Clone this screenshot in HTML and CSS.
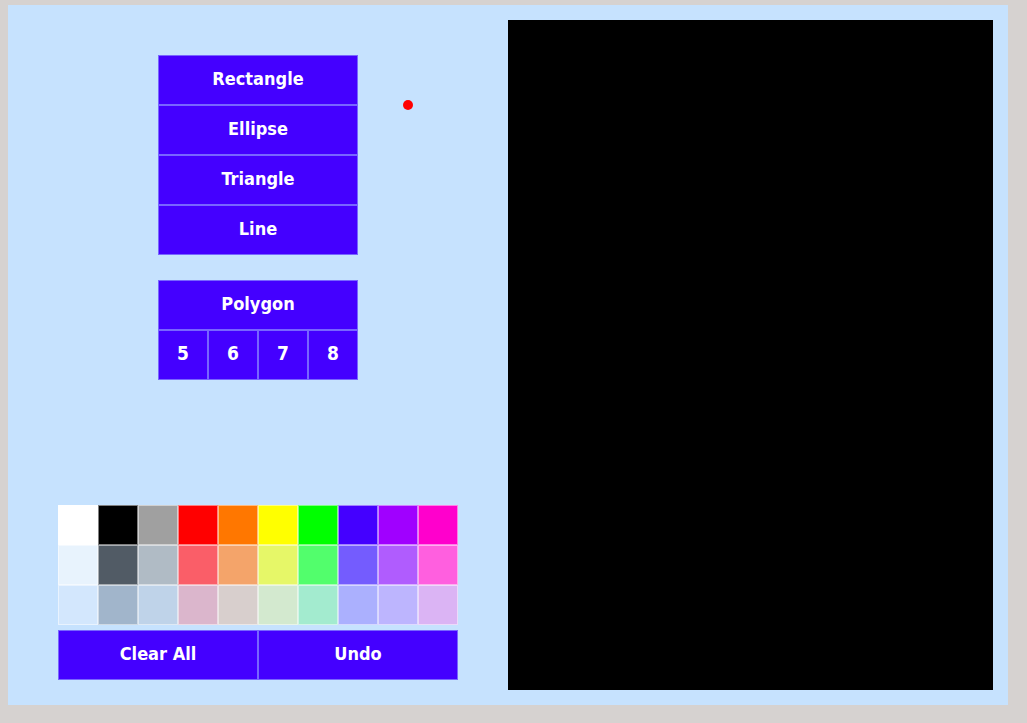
FILE: index.html
```html
<!DOCTYPE html>
<html>
<head>
<meta charset="utf-8">
<link rel="stylesheet" href="styles.css">
</head>
<body>
<div class="app">
  <div class="tools">
    <div class="group">
      <div class="btn">Rectangle</div>
      <div class="btn">Ellipse</div>
      <div class="btn">Triangle</div>
      <div class="btn">Line</div>
    </div>
    <div class="group poly">
      <div class="btn">Polygon</div>
      <div class="sides">
        <div class="btn">5</div>
        <div class="btn">6</div>
        <div class="btn">7</div>
        <div class="btn">8</div>
      </div>
    </div>
    <div class="spacer"></div>
    <div class="palette">
      <div class="sw" style="background:#ffffff"></div>
      <div class="sw" style="background:#000000"></div>
      <div class="sw" style="background:#a0a0a0"></div>
      <div class="sw" style="background:#ff0000"></div>
      <div class="sw" style="background:#ff7700"></div>
      <div class="sw" style="background:#ffff00"></div>
      <div class="sw" style="background:#00ff00"></div>
      <div class="sw" style="background:#4400ff"></div>
      <div class="sw" style="background:#a000ff"></div>
      <div class="sw" style="background:#ff00cc"></div>
      <div class="sw" style="background:#e8f3fd"></div>
      <div class="sw" style="background:#515b65"></div>
      <div class="sw" style="background:#b0bbc5"></div>
      <div class="sw" style="background:#fa5e68"></div>
      <div class="sw" style="background:#f4a46a"></div>
      <div class="sw" style="background:#e6f768"></div>
      <div class="sw" style="background:#52fe6c"></div>
      <div class="sw" style="background:#745cfe"></div>
      <div class="sw" style="background:#b05cfe"></div>
      <div class="sw" style="background:#ff5fdf"></div>
      <div class="sw" style="background:#d3e7fd"></div>
      <div class="sw" style="background:#a1b5cb"></div>
      <div class="sw" style="background:#bfd3e9"></div>
      <div class="sw" style="background:#dbb6cc"></div>
      <div class="sw" style="background:#d8cfcd"></div>
      <div class="sw" style="background:#d3e9cf"></div>
      <div class="sw" style="background:#a3ebcf"></div>
      <div class="sw" style="background:#abb0fe"></div>
      <div class="sw" style="background:#bdb5fe"></div>
      <div class="sw" style="background:#dbb4f4"></div>
    </div>
    <div class="actions">
      <div class="btn">Clear All</div>
      <div class="btn">Undo</div>
    </div>
  </div>
  <div class="canvas"></div>
  <div class="dot"></div>
</div>
</body>
</html>
```
FILE: styles.css
```css
html, body {
  margin: 0;
  padding: 0;
  background: #d6d2d0;
}
body {
  padding: 5px 0 0 8px;
  font-family: "DejaVu Sans Condensed", "DejaVu Sans", sans-serif;
}
.app {
  position: relative;
  width: 1000px;
  height: 700px;
  background: #c6e2fe;
  display: flex;
}
.tools {
  width: 500px;
  display: flex;
  flex-direction: column;
  align-items: center;
  padding: 50px 0 25px;
  box-sizing: border-box;
}
.group {
  width: 200px;
  display: flex;
  flex-direction: column;
}
.poly {
  margin-top: 25px;
}
.btn {
  height: 50px;
  box-sizing: border-box;
  background: #4400ff;
  border: 1px solid #7866ff;
  color: #ffffff;
  font-weight: bold;
  font-size: 18px;
  padding-bottom: 4px;
  display: flex;
  align-items: center;
  justify-content: center;
}
.sides {
  display: flex;
}
.sides .btn {
  width: 50px;
  font-size: 19px;
}
.spacer {
  flex: 1;
}
.palette {
  width: 400px;
  display: grid;
  grid-template-columns: repeat(10, 40px);
  grid-auto-rows: 40px;
}
.sw {
  box-sizing: border-box;
  border: 1px solid rgba(255, 255, 255, 0.5);
}
.actions {
  width: 400px;
  display: flex;
  margin-top: 5px;
}
.actions .btn {
  width: 200px;
}
.canvas {
  width: 485px;
  height: 670px;
  margin-top: 15px;
  background: #000000;
}
.dot {
  position: absolute;
  left: 395px;
  top: 95px;
  width: 10px;
  height: 10px;
  border-radius: 50%;
  background: #ff0000;
}
```
